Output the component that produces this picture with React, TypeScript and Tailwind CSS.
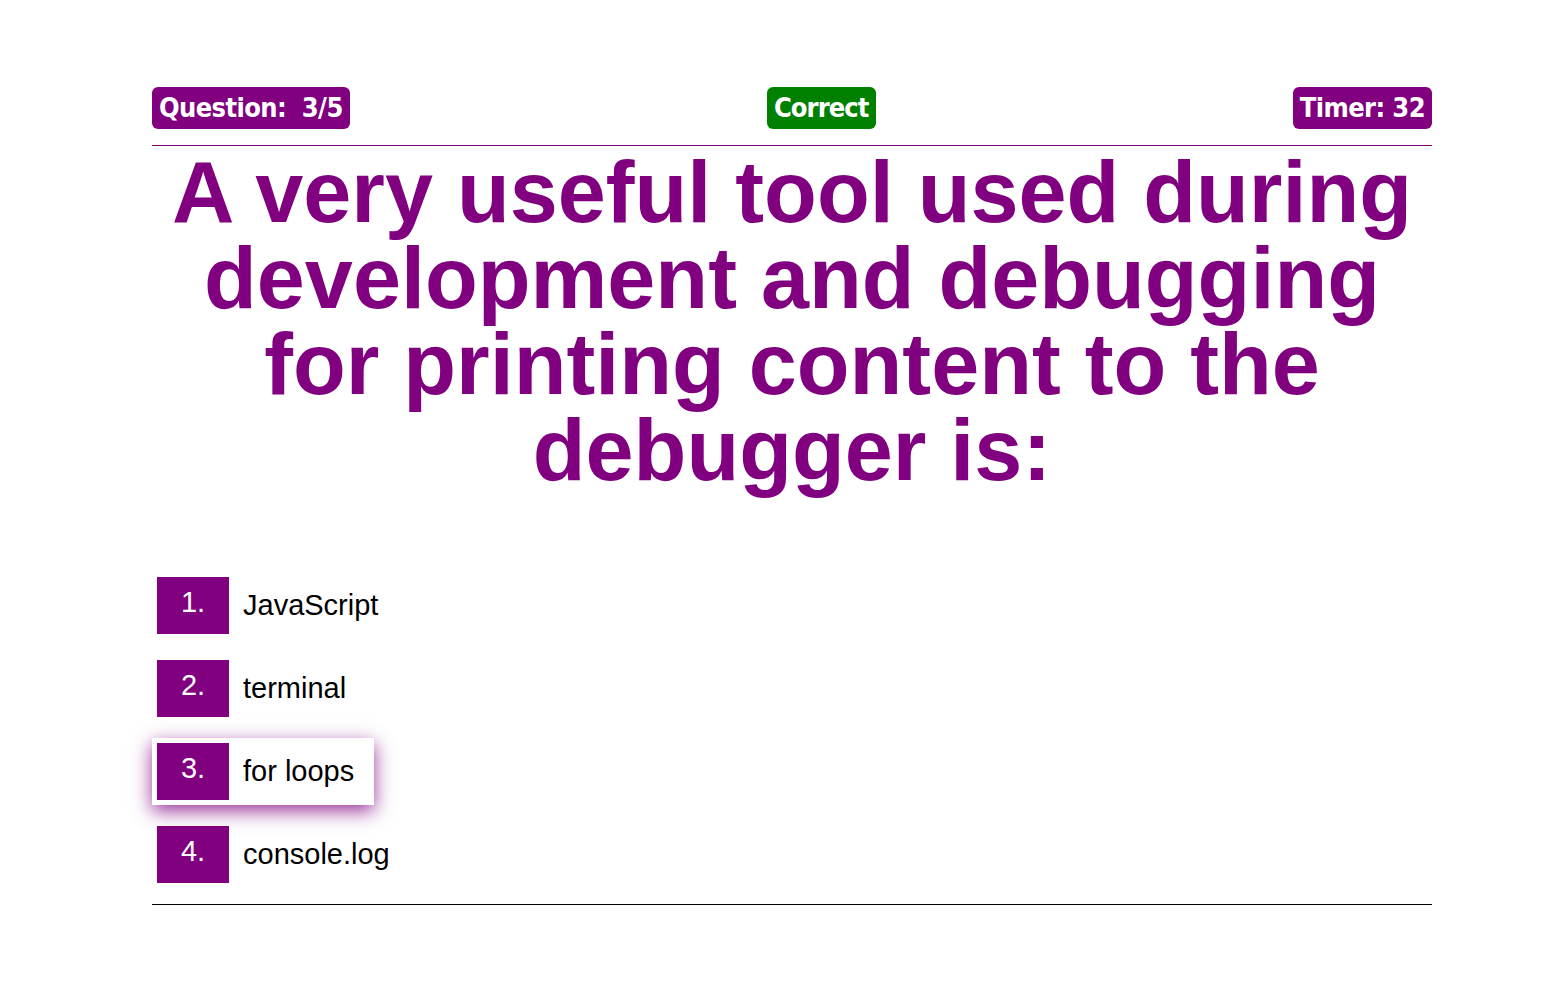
import React from "react";

const ANSWERS = ["JavaScript", "terminal", "for loops", "console.log"];

function Badge({ children, green }: { children: React.ReactNode; green?: boolean }) {
  return (
    <div
      className={`h-[42px] px-[7px] rounded-[6px] flex items-center text-white text-[27px] font-bold tracking-[-0.6px] whitespace-pre ${
        green ? "bg-[#008000] px-[6px] tracking-[-0.9px]" : "bg-[#800080]"
      }`}
      style={{ fontFamily: '"DejaVu Sans Condensed", "Liberation Sans Narrow", Roboto, sans-serif' }}
    >
      {children}
    </div>
  );
}

export default function App() {
  const hovered = 2;

  return (
    <div className="min-h-screen bg-white font-['Liberation_Sans',Arial,sans-serif]">
      <div className="w-[1280px] ml-[152px] pt-[87px]">
        <header className="flex justify-between items-center pb-4 border-b border-[#800080]">
          <Badge>{"Question:  3/5"}</Badge>
          <Badge green>Correct</Badge>
          <Badge>{"Timer: 32"}</Badge>
        </header>

        <h1 className="mt-[3px] text-center text-[86.4px] leading-[86px] font-bold text-[#800080]">
          A very useful tool used during development and debugging for printing content to the debugger is:
        </h1>

        <ol className="mt-[79px] pb-[16px] border-b border-black flex flex-col gap-4">
          {ANSWERS.map((a, i) => (
            <li
              key={a}
              className={`self-start flex items-center p-[5px] ${
                i === hovered ? "bg-white shadow-[0_6px_18px_rgba(128,0,128,0.8)]" : ""
              }`}
            >
              <div className="w-[72px] h-[57px] bg-[#800080] text-white text-[29px] text-center pt-[4px]">
                {i + 1}.
              </div>
              <div className="pl-[14px] pr-[15px] text-[29px] text-black">{a}</div>
            </li>
          ))}
        </ol>
      </div>
    </div>
  );
}
